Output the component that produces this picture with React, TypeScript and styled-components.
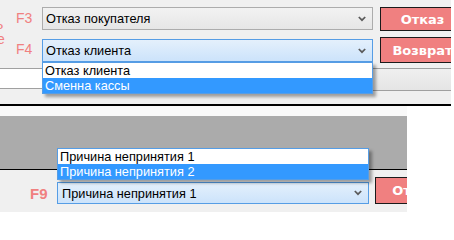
import React from "react";
import styled, { createGlobalStyle } from "styled-components";

const Global = createGlobalStyle`
  html, body { margin: 0; padding: 0; background: #ffffff; }
  * { box-sizing: border-box; }
`;

const Stage = styled.div`
  width: 454px;
  height: 212px;
  position: relative;
  overflow: hidden;
  background: #ffffff;
  display: flex;
  flex-direction: column;
  font-family: "Liberation Sans", Arial, sans-serif;
`;

const TopShot = styled.div`
  width: 451px;
  height: 106px;
  flex-shrink: 0;
  background: #f0f0f0;
  border-bottom: 2px solid #000;
  display: flex;
  flex-direction: row;
  overflow: hidden;
`;

const EdgeColumn = styled.div`
  width: 16px;
  flex-shrink: 0;
  padding-top: 17px;
  display: flex;
  flex-direction: column;
  overflow: hidden;
`;

const EdgeGlyph = styled.span<{ $shift: number }>`
  display: block;
  color: #f08080;
  font-size: 14px;
  line-height: 15px;
  margin-left: ${(p) => p.$shift}px;
  white-space: nowrap;
`;

const MainColumn = styled.div`
  flex: 1;
  min-width: 0;
  display: flex;
  flex-direction: column;
  padding-top: 7px;
`;

const FormRow = styled.div<{ $top: number }>`
  display: flex;
  flex-direction: row;
  align-items: flex-start;
  margin-top: ${(p) => p.$top}px;
`;

const KeyLabel = styled.div<{ $bold?: boolean; $dy?: number; $w: number }>`
  width: ${(p) => p.$w}px;
  flex-shrink: 0;
  color: #f08080;
  font-size: ${(p) => (p.$bold ? 15 : 14)}px;
  font-weight: ${(p) => (p.$bold ? 700 : 400)};
  line-height: 23px;
  margin-top: ${(p) => p.$dy ?? 0}px;
`;

const Combo = styled.div<{ $active?: boolean; $w: number; $h: number; $dy?: number }>`
  width: ${(p) => p.$w}px;
  height: ${(p) => p.$h}px;
  margin-top: ${(p) => p.$dy ?? 0}px;
  border: 1px solid ${(p) => (p.$active ? "#569de5" : "#acacac")};
  background: ${(p) =>
    p.$active
      ? "linear-gradient(#e4f0fc, #cce3fb)"
      : "linear-gradient(#f2f2f2, #e6e6e6)"};
  display: flex;
  align-items: center;
  padding: 0 6px 0 3px;
  font-size: 12.75px;
  color: #000;
  flex-shrink: 0;
`;

const ComboText = styled.span<{ $indent?: number }>`
  flex: 1;
  padding-left: ${(p) => p.$indent ?? 0}px;
  white-space: nowrap;
  overflow: hidden;
`;

const Chevron = () => (
  <svg width="8" height="6" viewBox="0 0 8 6">
    <polyline
      points="0.8,1 4,4.2 7.2,1"
      fill="none"
      stroke="#5a5a5a"
      strokeWidth="1.7"
    />
  </svg>
);

const ActionButton = styled.div<{ $w: number; $h: number; $gap: number }>`
  width: ${(p) => p.$w}px;
  height: ${(p) => p.$h}px;
  margin-left: ${(p) => p.$gap}px;
  flex-shrink: 0;
  background: #f08080;
  border: 1px solid #1a1a1a;
  color: #ffffff;
  font-family: "DejaVu Sans", Verdana, sans-serif;
  font-weight: 700;
  font-size: 13px;
  display: flex;
  align-items: center;
  justify-content: center;
  white-space: nowrap;
`;

const Band = styled.div`
  margin-top: 5px;
  margin-left: -16px;
  display: flex;
  flex-direction: row;
  align-items: flex-start;
  height: 23px;
`;

const BandField = styled.div`
  width: 200px;
  flex-shrink: 0;
  height: 21px;
  background: #ffffff;
  border-top: 1px solid #a0a0a0;
  border-bottom: 1px solid #a0a0a0;
`;

const BandButton = styled.div`
  flex: 1;
  height: 23px;
  background: linear-gradient(#efefef, #e5e5e5);
  border-top: 1px solid #a0a0a0;
  border-bottom: 1px solid #a0a0a0;
`;

const DropList = styled.div<{ $left: number; $top: number; $w: number }>`
  position: absolute;
  left: ${(p) => p.$left}px;
  top: ${(p) => p.$top}px;
  width: ${(p) => p.$w}px;
  border: 1px solid #569de5;
  background: #fff;
  box-shadow: 3px 3px 3px rgba(0, 0, 0, 0.35);
  font-size: 12.75px;
  z-index: 2;
`;

const DropItem = styled.div<{ $selected?: boolean; $pad: number }>`
  height: 15px;
  line-height: 15px;
  padding-left: ${(p) => p.$pad}px;
  background: ${(p) => (p.$selected ? "#3399ff" : "#ffffff")};
  color: ${(p) => (p.$selected ? "#ffffff" : "#000000")};
  white-space: nowrap;
`;

const BottomShot = styled.div`
  flex: 1;
  display: flex;
  flex-direction: row;
`;

const BottomPanel = styled.div`
  width: 407px;
  flex-shrink: 0;
  display: flex;
  flex-direction: column;
  overflow: hidden;
`;

const LightStrip = styled.div`
  height: 10px;
  background: #f9f9f9;
`;

const GrayBand = styled.div`
  height: 54px;
  background: #ababab;
  border-bottom: 1px solid #000;
`;

const BottomArea = styled.div`
  flex: 1;
  background: #f0f0f0;
  display: flex;
  flex-direction: row;
  align-items: flex-start;
  padding-top: 7px;
  padding-left: 30px;
  overflow: hidden;
`;

const WhiteRest = styled.div`
  flex: 1;
  background: #ffffff;
`;

export default function App() {
  return (
    <>
      <Global />
      <Stage>
        <TopShot>
          <EdgeColumn>
            <EdgeGlyph $shift={-4}>ь</EdgeGlyph>
            <EdgeGlyph $shift={-3}>е</EdgeGlyph>
          </EdgeColumn>
          <MainColumn>
            <FormRow $top={0}>
              <KeyLabel $w={26}>F3</KeyLabel>
              <Combo $w={331} $h={23}>
                <ComboText>Отказ покупателя</ComboText>
                <Chevron />
              </Combo>
              <ActionButton $w={85} $h={24} $gap={7}>
                Отказ
              </ActionButton>
            </FormRow>
            <FormRow $top={6}>
              <KeyLabel $w={26} $dy={1}>
                F4
              </KeyLabel>
              <Combo $active $w={331} $h={23} $dy={2}>
                <ComboText>Отказ клиента</ComboText>
                <Chevron />
              </Combo>
              <ActionButton $w={85} $h={26} $gap={7}>
                Возврат
              </ActionButton>
            </FormRow>
            <Band>
              <BandField />
              <BandButton />
            </Band>
          </MainColumn>
        </TopShot>
        <BottomShot>
          <BottomPanel>
            <LightStrip />
            <GrayBand />
            <BottomArea>
              <KeyLabel $bold $w={27} $dy={5}>
                F9
              </KeyLabel>
              <Combo $active $w={312} $h={22} $dy={5}>
                <ComboText $indent={1}>Причина непринятия 1</ComboText>
                <Chevron />
              </Combo>
              <ActionButton $w={78} $h={27} $gap={6}>
                Отказ
              </ActionButton>
            </BottomArea>
          </BottomPanel>
          <WhiteRest />
        </BottomShot>
        <DropList $left={42} $top={62} $w={331}>
          <DropItem $pad={2}>Отказ клиента</DropItem>
          <DropItem $pad={2} $selected>
            Сменна кассы
          </DropItem>
        </DropList>
        <DropList $left={57} $top={148} $w={312}>
          <DropItem $pad={2}>Причина непринятия 1</DropItem>
          <DropItem $pad={2} $selected>
            Причина непринятия 2
          </DropItem>
        </DropList>
      </Stage>
    </>
  );
}
